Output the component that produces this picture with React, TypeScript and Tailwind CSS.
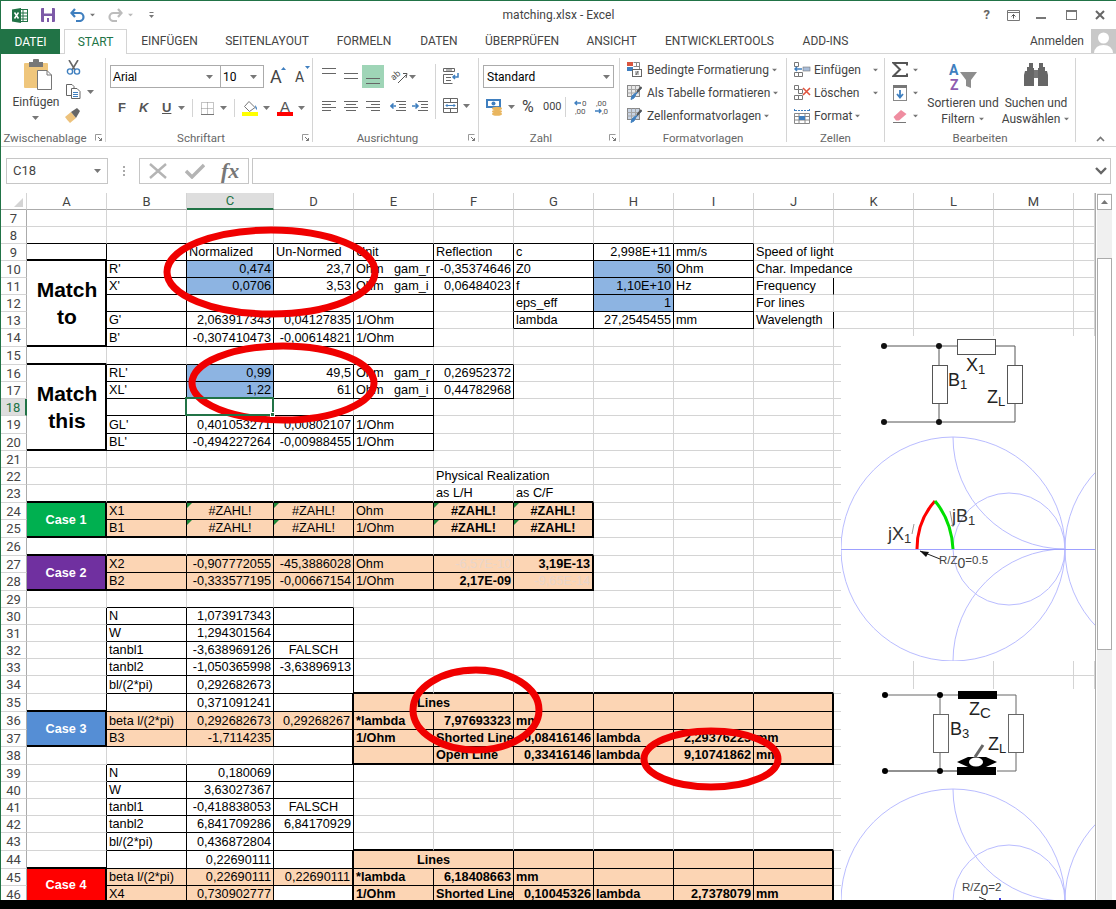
import React from 'react';

type Cell = { t?: string; a?: 'l' | 'r' | 'c'; b?: boolean; o?: boolean; bg?: string; fg?: string; big?: boolean; tri?: boolean; span?: string; covers?: string[] };

const COLS = 'ABCDEFGHIJKLMN'.split('');
const ROWS: number[] = [];
for (let r = 7; r <= 46; r++) ROWS.push(r);

const BLUE = 'bg-[#8db4e2]';
const ORANGE = 'bg-[#fcd5b4]';

const cells: Record<string, Cell> = {};
const put = (k: string, v: Cell) => {
  cells[k] = { ...(cells[k] || {}), ...v };
};
const L = (k: string, t: string, x: Cell = {}) => put(k, { t, a: 'l', ...x });
const R = (k: string, t: string, x: Cell = {}) => put(k, { t, a: 'r', ...x });
const C = (k: string, t: string, x: Cell = {}) => put(k, { t, a: 'c', ...x });

const hEdge: Record<string, number> = {};
const vEdge: Record<string, number> = {};
const setE = (m: Record<string, number>, k: string, v: number) => {
  m[k] = Math.max(m[k] || 0, v);
};
const parse = (k: string) => ({ c: COLS.indexOf(k[0]), r: parseInt(k.slice(1), 10) });
const box = (a: string, b: string, inner: number, outer: number) => {
  const p = parse(a);
  const q = parse(b);
  for (let r = p.r; r <= q.r; r++) {
    for (let c = p.c; c <= q.c; c++) {
      const top = r === p.r ? outer : inner;
      const bot = r === q.r ? outer : inner;
      const lef = c === p.c ? outer : inner;
      const rig = c === q.c ? outer : inner;
      if (top) setE(hEdge, `${r - 1},${c}`, top);
      if (bot) setE(hEdge, `${r},${c}`, bot);
      if (lef) setE(vEdge, `${r},${c - 1}`, lef);
      if (rig) setE(vEdge, `${r},${c}`, rig);
    }
  }
};
const fill = (a: string, b: string, bg: string) => {
  const p = parse(a);
  const q = parse(b);
  for (let r = p.r; r <= q.r; r++) for (let c = p.c; c <= q.c; c++) put(COLS[c] + r, { bg });
};

// ---- upper tables
box('A9', 'F9', 1, 1);
box('B10', 'F11', 1, 1);
box('B12', 'E12', 0, 1);
box('B12', 'B12', 0, 1);
box('B13', 'E14', 1, 1);
box('A10', 'A14', 0, 2);
box('B16', 'F17', 1, 1);
box('B18', 'E18', 0, 1);
box('B18', 'B18', 0, 1);
box('B19', 'E20', 1, 1);
box('A16', 'A20', 0, 2);
box('G9', 'I13', 1, 1);
setE(vEdge, '11,9', 1);
setE(vEdge, '13,9', 1);

put('A10', { t: 'Match\nto', big: true, span: 'row-span-5', covers: ['A11', 'A12', 'A13', 'A14'] });
put('A16', { t: 'Match\nthis', big: true, span: 'row-span-5', covers: ['A17', 'A18', 'A19', 'A20'] });

L('C9', 'Normalized');
L('D9', 'Un-Normed');
L('E9', 'Unit');
L('F9', 'Reflection');
L('G9', 'c');
R('H9', '2,998E+11');
L('I9', 'mm/s');
L('J9', 'Speed of light', { o: true });
L('B10', "R'");
R('C10', '0,474', { bg: BLUE });
R('D10', '23,7');
L('E10', 'Ohm   gam_r');
R('F10', '-0,35374646');
L('G10', 'Z0');
R('H10', '50', { bg: BLUE });
L('I10', 'Ohm');
L('J10', 'Char. Impedance', { o: true });
L('B11', "X'");
R('C11', '0,0706', { bg: BLUE });
R('D11', '3,53');
L('E11', 'Ohm   gam_i');
R('F11', '0,06484023');
L('G11', 'f');
R('H11', '1,10E+10', { bg: BLUE });
L('I11', 'Hz');
L('J11', 'Frequency');
L('G12', 'eps_eff');
R('H12', '1', { bg: BLUE });
L('J12', 'For lines');
L('B13', "G'");
R('C13', '2,063917343');
R('D13', '0,04127835');
L('E13', '1/Ohm');
L('G13', 'lambda');
R('H13', '27,2545455');
L('I13', 'mm');
L('J13', 'Wavelength');
L('B14', "B'");
R('C14', '-0,307410473');
R('D14', '-0,00614821');
L('E14', '1/Ohm');
L('B16', "RL'");
R('C16', '0,99', { bg: BLUE });
R('D16', '49,5');
L('E16', 'Ohm   gam_r');
R('F16', '0,26952372');
L('B17', "XL'");
R('C17', '1,22', { bg: BLUE });
R('D17', '61');
L('E17', 'Ohm   gam_i');
R('F17', '0,44782968');
L('B19', "GL'");
R('C19', '0,401053271');
R('D19', '0,00802107');
L('E19', '1/Ohm');
L('B20', "BL'");
R('C20', '-0,494227264');
R('D20', '-0,00988455');
L('E20', '1/Ohm');
L('F22', 'Physical Realization', { o: true });
L('F23', 'as L/H');
L('G23', 'as C/F');

// ---- cases
box('B24', 'G25', 1, 2);
box('A24', 'A25', 0, 2);
fill('B24', 'G25', ORANGE);
put('A24', { t: 'Case 1', a: 'c', b: true, bg: 'bg-[#00b050]', fg: 'text-white', span: 'row-span-2', covers: ['A25'] });
L('B24', 'X1');
C('C24', '#ZAHL!', { tri: true });
C('D24', '#ZAHL!', { tri: true });
L('E24', 'Ohm');
C('F24', '#ZAHL!', { b: true, tri: true });
C('G24', '#ZAHL!', { b: true, tri: true });
L('B25', 'B1');
C('C25', '#ZAHL!', { tri: true });
C('D25', '#ZAHL!', { tri: true });
L('E25', '1/Ohm');
C('F25', '#ZAHL!', { b: true, tri: true });
C('G25', '#ZAHL!', { b: true, tri: true });

box('B27', 'G28', 1, 2);
box('A27', 'A28', 0, 2);
fill('B27', 'G28', ORANGE);
put('A27', { t: 'Case 2', a: 'c', b: true, bg: 'bg-[#7030a0]', fg: 'text-white', span: 'row-span-2', covers: ['A28'] });
L('B27', 'X2');
R('C27', '-0,907772055');
R('D27', '-45,3886028');
L('E27', 'Ohm');
R('F27', '-6,57E-10', { fg: 'text-[#e9d6cb]' });
R('G27', '3,19E-13', { b: true });
L('B28', 'B2');
R('C28', '-0,333577195');
R('D28', '-0,00667154');
L('E28', '1/Ohm');
R('F28', '2,17E-09', { b: true });
R('G28', '-9,65E-14', { fg: 'text-[#e9d6cb]' });

box('B30', 'D37', 1, 1);
box('B39', 'D46', 1, 1);
L('B30', 'N');
R('C30', '1,073917343');
L('B31', 'W');
R('C31', '1,294301564');
L('B32', 'tanbl1');
R('C32', '-3,638969126');
C('D32', 'FALSCH');
L('B33', 'tanbl2');
R('C33', '-1,050365998');
R('D33', '-3,63896913');
L('B34', 'bl/(2*pi)');
R('C34', '0,292682673');
R('C35', '0,371091241');
fill('B36', 'D36', ORANGE);
fill('B37', 'C37', ORANGE);
L('B36', 'beta l/(2*pi)');
R('C36', '0,292682673');
R('D36', '0,29268267');
L('B37', 'B3');
R('C37', '-1,7114235');
box('A36', 'A37', 0, 2);
put('A36', { t: 'Case 3', a: 'c', b: true, bg: 'bg-[#558ed5]', fg: 'text-white', span: 'row-span-2', covers: ['A37'] });

L('B39', 'N');
R('C39', '0,180069');
L('B40', 'W');
R('C40', '3,63027367');
L('B41', 'tanbl1');
R('C41', '-0,418838053');
C('D41', 'FALSCH');
L('B42', 'tanbl2');
R('C42', '6,841709286');
R('D42', '6,84170929');
L('B43', 'bl/(2*pi)');
R('C43', '0,436872804');
R('C44', '0,22690111');
fill('B45', 'D45', ORANGE);
fill('B46', 'C46', ORANGE);
L('B45', 'beta l/(2*pi)');
R('C45', '0,22690111');
R('D45', '0,22690111');
L('B46', 'X4');
R('C46', '0,730902777');
box('A45', 'A46', 0, 2);
put('A45', { t: 'Case 4', a: 'c', b: true, bg: 'bg-[#ff0000]', fg: 'text-white', span: 'row-span-2', covers: ['A46'] });

// ---- lines tables
box('E35', 'J38', 1, 2);
fill('E35', 'J38', ORANGE);
put('E35', { t: 'Lines', a: 'c', b: true, span: 'col-span-2', covers: ['F35'] });
L('E36', '*lambda', { b: true });
R('F36', '7,97693323', { b: true });
L('G36', 'mm', { b: true });
L('E37', '1/Ohm', { b: true });
L('F37', 'Shorted Line', { b: true });
R('G37', '0,08416146', { b: true });
L('H37', 'lambda', { b: true });
R('I37', '2,29376223', { b: true });
L('J37', 'mm', { b: true });
L('F38', 'Open Line', { b: true });
R('G38', '0,33416146', { b: true });
L('H38', 'lambda', { b: true });
R('I38', '9,10741862', { b: true });
L('J38', 'mm', { b: true });

box('E44', 'J47', 1, 2);
fill('E44', 'J46', ORANGE);
put('E44', { t: 'Lines', a: 'c', b: true, span: 'col-span-2', covers: ['F44'] });
L('E45', '*lambda', { b: true });
R('F45', '6,18408663', { b: true });
L('G45', 'mm', { b: true });
L('E46', '1/Ohm', { b: true });
L('F46', 'Shorted Line', { b: true });
R('G46', '0,10045326', { b: true });
L('H46', 'lambda', { b: true });
R('I46', '2,7378079', { b: true });
L('J46', 'mm', { b: true });

const covered = new Set<string>();
Object.values(cells).forEach((v) => (v.covers || []).forEach((k) => covered.add(k)));

const BorderR: Record<number, string> = {
  0: 'border-r border-r-[#d4d4d4]',
  1: 'border-r border-r-black',
  2: 'border-r-2 border-r-black',
};
const BorderB: Record<number, string> = {
  0: 'border-b border-b-[#d4d4d4]',
  1: 'border-b border-b-black',
  2: 'border-b-2 border-b-black',
};
const noRight: Record<string, boolean> = { F22: true, J9: true, J10: true };

function SheetCell({ k }: { k: string }) {
  const cell = cells[k] || {};
  const { c, r } = parse(k);
  let endC = c;
  let endR = r;
  (cell.covers || []).forEach((x) => {
    const p = parse(x);
    endC = Math.max(endC, p.c);
    endR = Math.max(endR, p.r);
  });
  const rk = vEdge[`${r},${endC}`] || 0;
  const bk = hEdge[`${endR},${c}`] || 0;
  const right = noRight[k] ? 'border-r border-r-transparent' : BorderR[rk];
  const align = cell.a === 'r' ? 'justify-end pr-[2px]' : cell.a === 'c' ? 'justify-center' : 'justify-start pl-[2px]';
  return (
    <div
      className={`relative flex min-w-0 min-h-0 ${cell.big ? 'items-center text-center' : 'items-center pt-[1px]'} ${align} ${right} ${BorderB[bk]} ${cell.bg || ''} ${cell.fg || 'text-black'} ${cell.b ? 'font-bold' : ''} ${cell.o ? 'overflow-visible z-10' : k === 'C18' ? 'overflow-visible z-10' : 'overflow-hidden'} ${cell.span || ''} whitespace-pre`}
    >
      {cell.tri && (
        <svg width="5" height="5" className="absolute left-0 top-0">
          <polygon points="0,0 5,0 0,5" fill="#1f8a3a" />
        </svg>
      )}
      {cell.big ? (
        <span className="w-full text-[21px] font-bold leading-[27px]">{cell.t}</span>
      ) : (
        <span>{cell.t}</span>
      )}
      {k === 'C18' && (
        <div className="absolute -left-[2px] -top-[2px] -right-[1px] -bottom-[1px] border-2 border-[#217346]">
          <div className="absolute -right-[3px] -bottom-[3px] w-[5px] h-[5px] bg-[#217346] border border-white" />
        </div>
      )}
    </div>
  );
}

function Sheet() {
  return (
    <div className="w-[1095px] border-r border-r-[#ababab] overflow-hidden">
      <div className="grid grid-cols-[26px_80px_80px_87px_80px_80px_80px_80px_80px_80px_80px_80px_80px_80px_21px] grid-rows-[17px_17px_17px_17px_17px_17px_17px_17px_18px_18px_17px_17px_17px_18px_17px_17px_17px_18px_17px_18px_18px_17px_18px_17px_17px_17px_17px_17px_18px_18px_18px_17px_18px_17px_17px_17px_17px_18px_18px_17px_17px] text-[12.7px] leading-[15px] font-['Liberation_Sans',Arial,sans-serif]">
        <div className="flex items-end justify-end border-r border-r-[#d4d4d4] border-b border-b-[#ababab] pr-[3px] pb-[2px]">
          <svg width="9" height="9">
            <polygon points="9,0 9,9 0,9" fill="#d4d4d4" />
          </svg>
        </div>
        {COLS.map((c) => (
          <div
            key={c}
            className={`flex items-center justify-center border-r border-r-[#d4d4d4] font-['Roboto',sans-serif] text-[13px] ${
              c === 'C'
                ? 'bg-[#dedede] border-b-2 border-b-[#217346] text-[#217346]'
                : 'border-b border-b-[#ababab] text-[#444444]'
            }`}
          >
            {c === 'N' ? '' : c}
          </div>
        ))}
        {ROWS.map((r) => (
          <React.Fragment key={r}>
            <div
              className={`flex items-center justify-center font-['Roboto',sans-serif] text-[13px] border-b border-b-[#d4d4d4] ${
                r === 18
                  ? 'bg-[#dedede] border-r-2 border-r-[#217346] text-[#217346]'
                  : 'border-r border-r-[#ababab] text-[#444444]'
              }`}
            >
              {r}
            </div>
            {COLS.map((c) => {
              const k = c + r;
              if (covered.has(k)) return null;
              return <SheetCell key={k} k={k} />;
            })}
          </React.Fragment>
        ))}
      </div>
    </div>
  );
}

// ---------- small drawing helpers
function Ico({ w, h, className, children }: { w: number; h: number; className?: string; children?: React.ReactNode }) {
  return (
    <svg width={w} height={h} viewBox={`0 0 ${w} ${h}`} className={`shrink-0 block ${className || ''}`}>
      {children}
    </svg>
  );
}
const Caret = ({ className }: { className?: string }) => (
  <Ico w={7} h={4} className={className}>
    <polygon points="0,0 7,0 3.5,4" fill="#777777" />
  </Ico>
);
const Lines = ({ rows, w = 14, h = 14 }: { rows: [number, number, number][]; w?: number; h?: number }) => (
  <Ico w={w} h={h}>
    {rows.map(([y, x1, x2], i) => (
      <line key={i} x1={x1} x2={x2} y1={y + 0.5} y2={y + 0.5} stroke="#666666" strokeWidth="1" />
    ))}
  </Ico>
);

const Launcher = () => (
  <Ico w={7} h={7} className="absolute right-[3px] bottom-[1px]">
    <path d="M0.5 0.5H6.5M0.5 0.5V6.5" stroke="#999999" fill="none" />
    <path d="M3 3L6.5 6.5M6.5 4V6.5H4" stroke="#777777" fill="none" />
  </Ico>
);

function Group({ className, label, launcher, children }: { className: string; label: string; launcher?: boolean; children: React.ReactNode }) {
  return (
    <div className={`relative flex flex-col shrink-0 border-r border-r-[#d4d4d4] ${className}`}>
      <div className="flex-1 min-h-0">{children}</div>
      <div className={`h-[14px] -mb-[3px] text-center text-[11.5px] leading-[14px] text-[#666666] whitespace-nowrap ${launcher ? 'pr-[16px]' : ''}`}>{label}</div>
      {launcher && <Launcher />}
    </div>
  );
}

const StyleRow = ({ icon, text, caretClass, className }: { icon: React.ReactNode; text: string; caretClass: string; className?: string }) => (
  <div className={`flex items-center h-[23px] ${className || ''}`}>
    <div className="w-[20px] flex justify-start">{icon}</div>
    <span className="text-[12px] text-[#444444] whitespace-nowrap">{text}</span>
    <Caret className={`scale-75 ${caretClass}`} />
  </div>
);

function TableIcon({ tint, brush }: { tint: string; brush?: boolean }) {
  return (
    <Ico w={15} h={15}>
      <rect x="0.5" y="0.5" width="12" height="11" fill={tint} stroke="#888888" />
      <path d="M0.5 4.5H12.5M0.5 8H12.5M4.5 0.5V11.5M8.5 0.5V11.5" stroke="#a5a5a5" fill="none" />
      {brush && <path d="M14.5 3L9 9L7 13L4 14.5L5 11L8 8.5" fill="#3f7fbf" stroke="#3f7fbf" strokeWidth="1" />}
      {brush && <path d="M14.5 2L10 7" stroke="#555555" strokeWidth="2" />}
    </Ico>
  );
}

const Paste = () => (
  <Ico w={30} h={32}>
    <rect x="2" y="4" width="24" height="25" rx="1" fill="#efc67c" />
    <rect x="7" y="3" width="14" height="5" fill="#777777" />
    <rect x="11" y="0" width="6" height="4" rx="1" fill="#777777" />
    <path d="M15.5 11.5H25L29.5 16V30.5H15.5Z" fill="#ffffff" stroke="#777777" />
    <path d="M25 11.5V16H29.5" fill="none" stroke="#777777" />
  </Ico>
);

const Scissors = () => (
  <Ico w={15} h={15}>
    <path d="M3 0L9 10M12 0L6 10" stroke="#666666" strokeWidth="1.6" />
    <circle cx="4" cy="11.5" r="2.6" fill="none" stroke="#3f7fbf" strokeWidth="1.4" />
    <circle cx="11" cy="11.5" r="2.6" fill="none" stroke="#3f7fbf" strokeWidth="1.4" />
  </Ico>
);

const Copy = () => (
  <Ico w={15} h={15}>
    <path d="M0.5 0.5H6L8 2.5V11.5H0.5Z" fill="#ffffff" stroke="#666666" />
    <path d="M5.5 4.5H11L14 7.5V14.5H5.5Z" fill="#ffffff" stroke="#666666" />
    <path d="M7 8.5H12M7 10.5H12M7 12.5H12" stroke="#3f7fbf" />
  </Ico>
);

const Brush = () => (
  <Ico w={17} h={15}>
    <path d="M0 9L6 4L11 10L5 15Q2 12 0 9Z" fill="#edc27c" />
    <path d="M6 4L12 0L15 3L11 10Z" fill="#666666" />
  </Ico>
);

export default function App() {
  return (
    <div className="relative w-[1116px] h-[909px] overflow-hidden bg-white font-['Roboto',sans-serif]">
      <div className="h-[900px] border-l border-t border-[#217346] overflow-hidden flex flex-col">
        {/* title bar */}
        <div className="relative flex items-center h-[28px] shrink-0">
          <Ico w={16} h={15} className="ml-[11px]">
            <rect x="6.5" y="1.5" width="9" height="12" fill="#ffffff" stroke="#217346" />
            <path d="M7 5H15M7 8H15M7 11H15M11 2V13" stroke="#217346" />
            <polygon points="0,1.5 9,0 9,15 0,13.5" fill="#217346" />
            <path d="M2.5 4.5L6.5 10.5M6.5 4.5L2.5 10.5" stroke="#ffffff" strokeWidth="1.5" />
          </Ico>
          <Ico w={14} h={14} className="ml-[13px]">
            <rect x="0" y="0" width="14" height="14" rx="1" fill="#7d5aa8" />
            <rect x="3" y="0" width="8" height="5.5" fill="#ffffff" />
            <rect x="3" y="8" width="8" height="6" fill="#ffffff" />
            <rect x="6" y="10" width="2" height="4" fill="#7d5aa8" />
          </Ico>
          <Ico w={15} h={14} className="ml-[15px]">
            <path d="M5 1L1.5 5L5 9M1.5 5H9.5A4 4 0 0 1 9.5 13H6" fill="none" stroke="#3f7fbf" strokeWidth="2.2" />
          </Ico>
          <Caret className="ml-[4px] scale-75" />
          <Ico w={15} h={14} className="ml-[12px]">
            <path d="M10 1L13.5 5L10 9M13.5 5H5.5A4 4 0 0 0 5.5 13H9" fill="none" stroke="#bcbcbc" strokeWidth="2.2" />
          </Ico>
          <Caret className="ml-[4px] scale-75 opacity-50" />
          <Ico w={7} h={7} className="ml-[14px]">
            <path d="M1.5 0.5H5.5" stroke="#777777" />
            <polygon points="1,3 6,3 3.5,6" fill="#777777" />
          </Ico>
          <div className="absolute left-0 right-0 top-[7px] text-center text-[12px] leading-[15px] text-[#444444]">matching.xlsx - Excel</div>
          <div className="ml-auto flex items-center text-[#666666] pr-[11px]">
            <span className="text-[13px] font-bold mr-[17px]">?</span>
            <Ico w={13} h={11} className="mr-[16px]">
              <path d="M0.5 0.5H12.5V10.5H0.5ZM0.5 2.5H12.5" fill="none" stroke="#777777" />
              <path d="M6.5 8.5V4.5M4.5 6.5L6.5 4.5L8.5 6.5" fill="none" stroke="#555555" />
            </Ico>
            <Ico w={10} h={10} className="mr-[20px]">
              <rect x="0" y="7" width="10" height="2" fill="#777777" />
            </Ico>
            <Ico w={11} h={10} className="mr-[18px]">
              <rect x="0.5" y="1" width="10" height="8.5" fill="none" stroke="#777777" />
              <rect x="0" y="0" width="11" height="2" fill="#777777" />
            </Ico>
            <Ico w={10} h={10}>
              <path d="M1 1L9 9M9 1L1 9" stroke="#666666" strokeWidth="2" />
            </Ico>
          </div>
        </div>
        {/* tabs */}
        <div className="relative flex h-[25px] shrink-0 border-b border-b-[#d4d4d4] text-[12px] text-[#444444]">
          <div className="flex items-center justify-center w-[59px] h-[25px] bg-[#217346] text-white">DATEI</div>
          <div className="flex items-center justify-center w-[63px] h-[25px] ml-[4px] bg-white text-[#217346] border border-[#d4d4d4] border-b-0 z-10">START</div>
          {[
            ['EINFÜGEN', 'w-[85px]'],
            ['SEITENLAYOUT', 'w-[110px]'],
            ['FORMELN', 'w-[84px]'],
            ['DATEN', 'w-[66px]'],
            ['ÜBERPRÜFEN', 'w-[100px]'],
            ['ANSICHT', 'w-[79px]'],
            ['ENTWICKLERTOOLS', 'w-[137px]'],
            ['ADD-INS', 'w-[75px]'],
          ].map(([t, w]) => (
            <div key={t} className={`flex items-center justify-center h-[24px] ${w}`}>
              {t}
            </div>
          ))}
          <div className="ml-auto flex items-center">
            <span className="mr-[7px] text-[#444444]">Anmelden</span>
            <Ico w={25} h={24}>
              <rect width="25" height="24" fill="#c8c8c8" />
              <circle cx="12.5" cy="9" r="5.5" fill="#ffffff" />
              <path d="M3 24Q4 16 12.5 16Q21 16 22 24Z" fill="#ffffff" />
            </Ico>
          </div>
        </div>
        {/* ribbon */}
        <div className="relative flex h-[93px] shrink-0 pt-[4px] pb-[4px] border-b border-b-[#d4d4d4] text-[#444444]">
          <Group className="w-[105px]" label="Zwischenablage" launcher>
            <div className="flex">
              <div className="w-[62px] flex flex-col items-center">
                <div className="mt-[1px] ml-[10px]"><Paste /></div>
                <div className="text-[12px] leading-[16px] mt-[3px] ml-[8px]">Einfügen</div>
                <Caret className="mt-[6px] ml-[6px]" />
              </div>
              <div className="flex flex-col">
                <div className="mt-[2px] ml-[3px]"><Scissors /></div>
                <div className="mt-[9px] ml-[3px] flex items-center"><Copy /><Caret className="ml-[6px]" /></div>
                <div className="mt-[9px] ml-[2px]"><Brush /></div>
              </div>
            </div>
          </Group>
          <Group className="w-[207px]" label="Schriftart" launcher>
            <div className="flex items-center mt-[7px] ml-[4px]">
              <div className="flex items-center justify-between w-[111px] h-[23px] border border-[#ababab] pl-[2px] pr-[7px] text-[13px] text-black">
                <span className="font-['Liberation_Sans',sans-serif] text-[12px]">Arial</span>
                <Caret />
              </div>
              <div className="flex items-center justify-between w-[44px] h-[23px] -ml-px border border-[#ababab] pl-[2px] pr-[6px] text-[12px] text-black">
                <span>10</span>
                <Caret />
              </div>
              <div className="relative ml-[6px] w-[16px] text-[18px] leading-[20px]">
                A
                <Ico w={5} h={3} className="absolute right-0 top-0"><polygon points="0,3 5,3 2.5,0" fill="#3f7fbf" /></Ico>
              </div>
              <div className="relative ml-[9px] w-[15px] text-[14px] leading-[20px] pt-[1px]">
                A
                <Ico w={5} h={3} className="absolute right-0 top-0"><polygon points="0,0 5,0 2.5,3" fill="#3f7fbf" /></Ico>
              </div>
            </div>
            <div className="flex items-center h-[18px] mt-[11px] ml-[12px] text-[13px] font-bold text-[#555555] font-['Liberation_Sans',sans-serif]">
              <span className="w-[8px]">F</span>
              <span className="w-[9px] ml-[13px] italic">K</span>
              <span className="w-[9px] ml-[14px] underline">U</span>
              <Caret className="ml-[7px]" />
              <div className="w-px h-[18px] bg-[#d4d4d4] ml-[7px]" />
              <Ico w={13} h={13} className="ml-[8px]">
                <path d="M0.5 0.5H12.5V12.5H0.5ZM6.5 0.5V12.5M0.5 6.5H12.5" fill="none" stroke="#8a8a8a" strokeDasharray="1 1" />
                <path d="M0 12.5H13" stroke="#777777" />
              </Ico>
              <Caret className="ml-[6px]" />
              <div className="w-px h-[18px] bg-[#d4d4d4] ml-[7px]" />
              <div className="ml-[7px] flex flex-col">
                <Ico w={16} h={11}>
                  <path d="M7 0.5L13 6.5L7.5 10.5L2.5 5.5Z" fill="#ffffff" stroke="#777777" />
                  <path d="M13 4Q16 7 14.5 9Q13 7 13 4Z" fill="#3f7fbf" />
                </Ico>
                <div className="h-[4px] w-[16px] bg-[#ffff00]" />
              </div>
              <Caret className="ml-[5px]" />
              <div className="ml-[7px] flex flex-col items-center w-[16px]">
                <span className="text-[15px] leading-[11px] font-normal">A</span>
                <div className="h-[4px] w-[16px] bg-[#ff0000]" />
              </div>
              <Caret className="ml-[5px]" />
            </div>
          </Group>
          <Group className="w-[166px]" label="Ausrichtung" launcher>
            <div className="flex ml-[9px]">
              <div className="flex flex-col">
                <div className="flex items-center h-[23px] mt-[7px]">
                  <Lines h={23} rows={[[3, 0, 14], [8, 0, 14]]} />
                  <div className="ml-[8px]"><Lines h={23} rows={[[8, 0, 14], [13, 0, 14]]} /></div>
                  <div className="ml-[4px] w-[22px] h-[23px] bg-[#9fd5b7] pl-[4px]"><Lines h={23} rows={[[13, 0, 14], [18, 0, 14]]} /></div>
                  <Ico w={18} h={15} className="ml-[6px] overflow-visible">
                    <text x="1" y="9" fontSize="9" fill="#555555" transform="rotate(-40 6 7)" fontFamily="Roboto">ab</text>
                    <path d="M8 14L16 6M13 4.5L17 4.5L16 9" fill="none" stroke="#555555" />
                  </Ico>
                  <Caret className="ml-[1px]" />
                </div>
                <div className="flex items-center h-[16px] mt-[9px]">
                  <Lines rows={[[3, 0, 14], [6, 0, 9], [9, 0, 14], [12, 0, 9]]} />
                  <div className="ml-[8px]"><Lines rows={[[3, 0, 14], [6, 2, 12], [9, 0, 14], [12, 2, 12]]} /></div>
                  <div className="ml-[8px]"><Lines rows={[[3, 0, 14], [6, 5, 14], [9, 0, 14], [12, 5, 14]]} /></div>
                  <Ico w={16} h={14} className="ml-[10px]">
                    <path d="M6 3.5H16M9 6.5H16M9 9.5H16M6 12.5H16" stroke="#666666" />
                    <path d="M6 8H1M3.5 5.5L1 8L3.5 10.5" stroke="#3f7fbf" strokeWidth="1.6" fill="none" />
                  </Ico>
                  <Ico w={16} h={14} className="ml-[6px]">
                    <path d="M6 3.5H16M9 6.5H16M9 9.5H16M6 12.5H16" stroke="#666666" />
                    <path d="M0 8H6M3.5 5.5L6 8L3.5 10.5" stroke="#3f7fbf" strokeWidth="1.6" fill="none" />
                  </Ico>
                </div>
              </div>
              <div className="w-px h-[55px] bg-[#d4d4d4] ml-[7px] mt-[6px]" />
              <div className="flex flex-col ml-[7px]">
                <Ico w={16} h={16} className="mt-[10px]">
                  <path d="M0.5 0.5H11.5V3.5H0.5ZM0.5 6.5H10M0.5 6.5V15.5H9.5M3 9.5H8M3 12.5H8M3 2H9" fill="none" stroke="#666666" />
                  <path d="M15 5V9H10M12 7L10 9L12 11" fill="none" stroke="#3f7fbf" strokeWidth="1.5" />
                </Ico>
                <div className="flex items-center mt-[14px]">
                  <Ico w={15} h={15}>
                    <path d="M0.5 0.5H14.5V14.5H0.5ZM0.5 4.5H14.5M0.5 10.5H14.5M7.5 0.5V4.5M7.5 10.5V14.5" fill="none" stroke="#666666" />
                    <path d="M3 7.5H12M4.5 6L3 7.5L4.5 9M10.5 6L12 7.5L10.5 9" fill="none" stroke="#3f7fbf" />
                  </Ico>
                  <Caret className="ml-[5px]" />
                </div>
              </div>
            </div>
          </Group>
          <Group className="w-[141px]" label="Zahl" launcher>
            <div className="flex items-center justify-between w-[131px] h-[23px] mt-[7px] ml-[4px] border border-[#ababab] pl-[3px] pr-[3px] text-[12px] text-black">
              <span>Standard</span>
              <Caret />
            </div>
            <div className="flex items-center h-[18px] mt-[10px] ml-[7px]">
              <Ico w={17} h={17}>
                <rect x="0" y="0" width="15" height="9" fill="#3f7fbf" />
                <rect x="2" y="2" width="11" height="5" fill="#ffffff" />
                <circle cx="7.5" cy="4.5" r="2" fill="#3f7fbf" />
                <ellipse cx="11" cy="9.5" rx="5" ry="1.8" fill="#e9b65f" />
                <ellipse cx="11" cy="12.5" rx="5" ry="1.8" fill="#e9b65f" />
                <ellipse cx="11" cy="15" rx="5" ry="1.8" fill="#e9b65f" />
              </Ico>
              <Caret className="ml-[5px]" />
              <span className="ml-[7px] text-[16px] w-[15px]">%</span>
              <span className="ml-[6px] text-[11px] w-[15px]">000</span>
              <div className="w-px h-[20px] bg-[#d4d4d4] ml-[7px]" />
              <Ico w={14} h={16} className="ml-[8px]">
                <path d="M1 4H7M3 2L1 4L3 6" fill="none" stroke="#3f7fbf" strokeWidth="1.4" />
                <text x="8" y="7" fontSize="8" fill="#555555" fontFamily="Roboto">0</text>
                <text x="1" y="15" fontSize="8" fill="#555555" fontFamily="Roboto">,00</text>
              </Ico>
              <Ico w={14} h={16} className="ml-[7px]">
                <text x="1" y="7" fontSize="8" fill="#555555" fontFamily="Roboto">,00</text>
                <path d="M0 12H6M4 10L6 12L4 14" fill="none" stroke="#3f7fbf" strokeWidth="1.4" />
                <text x="7" y="15" fontSize="8" fill="#555555" fontFamily="Roboto">,0</text>
              </Ico>
            </div>
          </Group>
          <Group className="w-[167px]" label="Formatvorlagen">
            <div className="ml-[7px]">
              <StyleRow
                text="Bedingte Formatierung"
                caretClass="ml-[2px]"
                icon={
                  <Ico w={15} h={15}>
                    <rect x="0" y="0" width="6" height="4" fill="#d9553f" />
                    <rect x="0" y="5" width="6" height="4" fill="#3f7fbf" />
                    <path d="M6.5 0.5H12.5V7M6.5 4.5H12.5M9.5 0.5V5" fill="none" stroke="#888888" />
                    <rect x="5.5" y="7.5" width="9" height="7" fill="#ffffff" stroke="#666666" />
                    <path d="M8 10H12M8 12H12M9 13L11 9" stroke="#555555" fill="none" strokeWidth="0.8" />
                  </Ico>
                }
              />
              <StyleRow caretClass="ml-[2px]" text="Als Tabelle formatieren" icon={<TableIcon tint="#e9e9e9" brush />} />
              <StyleRow caretClass="ml-[2px]" text="Zellenformatvorlagen" icon={<TableIcon tint="#c9d4e4" brush />} />
            </div>
          </Group>
          <Group className="w-[98px]" label="Zellen">
            <div className="ml-[7px]">
              <StyleRow
                text="Einfügen"
                caretClass="ml-[11px]"
                icon={
                  <Ico w={17} h={15}>
                    <path d="M0.5 0.5H4.5V4.5H0.5ZM0.5 10.5H4.5V14.5H0.5ZM4.5 10.5H8.5V14.5H4.5Z" fill="none" stroke="#777777" />
                    <rect x="9" y="5" width="7" height="4" fill="#a8bcd8" stroke="#777777" strokeWidth="0.6" />
                    <path d="M8 7H1M3 5L1 7L3 9" fill="none" stroke="#3f7fbf" strokeWidth="1.5" />
                  </Ico>
                }
              />
              <StyleRow
                text="Löschen"
                caretClass="ml-[13px]"
                icon={
                  <Ico w={17} h={15}>
                    <path d="M0.5 0.5H4.5V4.5H0.5ZM0.5 10.5H4.5V14.5H0.5ZM4.5 10.5H8.5V14.5H4.5ZM4.5 4.5H8.5V8.5H4.5Z" fill="none" stroke="#777777" />
                    <path d="M9 3L16 10M16 3L9 10" stroke="#e0533d" strokeWidth="1.6" />
                  </Ico>
                }
              />
              <StyleRow
                text="Format"
                caretClass="ml-[2px]"
                icon={
                  <Ico w={16} h={16}>
                    <path d="M0.5 1V4M15.5 1V4M1 2.5H15" stroke="#3f7fbf" strokeDasharray="2 1" fill="none" />
                    <path d="M0.5 5.5H15.5V15.5H0.5ZM0.5 8.5H15.5M0.5 12H15.5M5 5.5V15.5M11 5.5V15.5" fill="none" stroke="#888888" />
                    <rect x="5" y="8" width="6" height="4" fill="#3f7fbf" />
                  </Ico>
                }
              />
            </div>
          </Group>
          <Group className="w-[191px]" label="Bearbeiten">
            <div className="flex">
              <div className="flex flex-col ml-[7px] w-[32px]">
                <div className="flex items-center h-[23px]">
                  <Ico w={16} h={15}>
                    <path d="M15 3.5V1H1.5L8 7.5L1.5 14H15V11.5" fill="none" stroke="#555555" strokeWidth="2" />
                  </Ico>
                  <Caret className="ml-[4px] scale-75" />
                </div>
                <div className="flex items-center h-[23px]">
                  <Ico w={14} h={16} className="ml-[1px]">
                    <rect x="0.5" y="0.5" width="13" height="15" fill="#ffffff" stroke="#888888" />
                    <rect x="0" y="0" width="14" height="3" fill="#777777" />
                    <path d="M7 5V12M4 9L7 12.5L10 9" fill="none" stroke="#3f7fbf" strokeWidth="1.8" />
                  </Ico>
                  <Caret className="ml-[5px] scale-75" />
                </div>
                <div className="flex items-center h-[23px]">
                  <Ico w={14} h={14} className="ml-[1px]">
                    <path d="M0.5 8L8 1L13.5 5L6 11.5H3Z" fill="#ef8da0" />
                    <path d="M0 13.5H13" stroke="#777777" />
                  </Ico>
                  <Caret className="ml-[5px] scale-75" />
                </div>
              </div>
              <div className="flex flex-col items-center w-[70px] ml-[4px]">
                <Ico w={30} h={28} className="mt-[5px]">
                  <text x="1" y="12" fontSize="14" fontWeight="700" fill="#3f7fbf" fontFamily="Roboto">A</text>
                  <text x="2" y="27" fontSize="14" fontWeight="700" fill="#8f5cb0" fontFamily="Roboto">Z</text>
                  <polygon points="12,9 29,9 23,17 23,25 18,23 18,17" fill="#8d8d8d" />
                </Ico>
                <div className="text-[12px] leading-[16px] mt-[4px] whitespace-nowrap">Sortieren und</div>
                <div className="flex items-center text-[12px] leading-[16px] whitespace-nowrap">Filtern<Caret className="ml-[3px] scale-75" /></div>
              </div>
              <div className="flex flex-col items-center w-[70px] ml-[3px]">
                <Ico w={26} h={24} className="mt-[5px]">
                  <path d="M6 0H10V5H11V23H1V12L2 8H4V4H6Z" fill="#666666" />
                  <path d="M20 0H16V5H15V23H25V12L24 8H22V4H20Z" fill="#666666" />
                  <rect x="11" y="7" width="4" height="8" fill="#777777" />
                </Ico>
                <div className="text-[12px] leading-[16px] mt-[8px] whitespace-nowrap">Suchen und</div>
                <div className="flex items-center text-[12px] leading-[16px] whitespace-nowrap">Auswählen<Caret className="ml-[3px] scale-75" /></div>
              </div>
            </div>
          </Group>
          <div className="relative flex-1">
            <Ico w={9} h={6} className="absolute right-[11px] bottom-[0px]">
              <path d="M1 5L4.5 1.5L8 5" fill="none" stroke="#777777" strokeWidth="1.6" />
            </Ico>
          </div>
        </div>
        {/* formula bar */}
        <div className="flex items-start h-[46px] shrink-0 pt-[11px] pl-[5px]">
          <div className="flex items-center justify-between w-[102px] h-[26px] border border-[#c6c6c6] pl-[6px] pr-[6px] text-[13px] text-[#444444]">
            <span>C18</span>
            <Caret />
          </div>
          <div className="w-[2px] h-[10px] ml-[15px] mt-[8px] border-l-2 border-dotted border-[#aaaaaa]" />
          <div className="flex items-center w-[110px] h-[26px] ml-[14px] border border-[#c6c6c6]">
            <Ico w={18} h={16} className="ml-[9px]">
              <path d="M1 1L17 15M17 1L1 15" stroke="#b4b4b4" strokeWidth="2.4" />
            </Ico>
            <Ico w={20} h={16} className="ml-[18px]">
              <path d="M1 8L7 14L19 2" fill="none" stroke="#b4b4b4" strokeWidth="3.4" />
            </Ico>
            <span className="ml-[16px] font-['Liberation_Serif',serif] italic font-bold text-[22px] leading-[22px] text-[#777777]">fx</span>
          </div>
          <div className="flex items-center justify-end w-[859px] h-[26px] ml-[3px] border border-[#c6c6c6] pr-[3px]">
            <Ico w={12} h={8}>
              <path d="M1 1L6 6L11 1" fill="none" stroke="#666666" strokeWidth="2.4" />
            </Ico>
          </div>
        </div>
        {/* sheet + scrollbar */}
        <div className="relative flex flex-1 min-h-0">
          <Sheet />
          <div className="w-[15px] ml-px bg-[#f0f0f0] flex flex-col">
            <div className="flex items-center justify-center h-[16px] mt-px bg-white border border-[#ababab]">
              <Ico w={7} h={4}>
                <polygon points="0,4 7,4 3.5,0" fill="#777777" />
              </Ico>
            </div>
            <div className="h-[392px] mt-[48px] bg-white border border-[#ababab]" />
          </div>
        </div>
      </div>
      <div className="h-[9px] bg-black" />

      {/* picture 1 floating above the sheet */}
      <svg width="254" height="325" viewBox="841 336 254 325" className="absolute left-[841px] top-[336px] bg-white font-['Liberation_Sans',sans-serif]">
        <g stroke="#555555" strokeWidth="1" fill="none">
          <path d="M884 346H957M995 346H1015V365M1015 403V422H884M939 346V365M939 403V422" />
          <rect x="957.5" y="339.5" width="38" height="15" fill="#fff" />
          <rect x="932.5" y="365.5" width="15" height="38" fill="#fff" />
          <rect x="1007.5" y="365.5" width="15" height="38" fill="#fff" />
        </g>
        <g fill="#111111">
          <circle cx="884" cy="346" r="3" />
          <circle cx="939" cy="346" r="3" />
          <circle cx="884" cy="422" r="3" />
          <circle cx="939" cy="422" r="3" />
        </g>
        <g fill="#222222" fontSize="18">
          <text x="966" y="371">X<tspan fontSize="13" dy="3">1</tspan></text>
          <text x="948" y="386">B<tspan fontSize="13" dy="3">1</tspan></text>
          <text x="987" y="403">Z<tspan fontSize="13" dy="3">L</tspan></text>
        </g>
        <g stroke="#b9bcff" strokeWidth="1" fill="none">
          <circle cx="953" cy="549" r="112" />
          <circle cx="1009" cy="549" r="56" />
          <path d="M953 437A112 112 0 0 0 1065 549A112 112 0 0 0 953 661" />
          <circle cx="1177" cy="549" r="112" />
          <path d="M841 549.5H1095" stroke="#9da0ff" />
        </g>
        <path d="M917 549C917 528 925 512 935 501" fill="none" stroke="#ff0000" strokeWidth="3" />
        <path d="M953 549C952 530 945 513 935 501" fill="none" stroke="#00e000" strokeWidth="3" />
        <g fill="#333333" fontSize="18">
          <text x="888" y="540">jX<tspan fontSize="13" dy="3">1</tspan></text>
          <text x="952" y="522">jB<tspan fontSize="13" dy="3">1</tspan></text>
        </g>
        <text x="939" y="564" fontSize="11.5" fill="#444444">R/Z<tspan fontSize="14" dy="4">0</tspan><tspan dy="-4">=0.5</tspan></text>
        <path d="M940 559L920 551" stroke="#222222" />
        <polygon points="920,551 929,552 926,557" fill="#111111" />
        <path d="M912 534L914 524M950 511L953 527" stroke="#999999" fill="none" />
      </svg>

      {/* picture 2 floating above the sheet */}
      <svg width="254" height="211" viewBox="841 689 254 211" className="absolute left-[841px] top-[689px] bg-white font-['Liberation_Sans',sans-serif]">
        <g stroke="#666666" strokeWidth="1" fill="none">
          <path d="M885 695H958M997 695H1016V714M1016 752V771H997M940 695V714M940 752V771" />
          <path d="M885 771H957" stroke="#222222" />
          <rect x="933.5" y="714.5" width="15" height="38" fill="#fff" />
          <rect x="1008.5" y="714.5" width="15" height="38" fill="#fff" />
        </g>
        <g fill="#000000">
          <rect x="958" y="691" width="39" height="8" />
          <rect x="957" y="767" width="39" height="8" />
          <polygon points="957,762 968,757 986,757 997,762 986,767 968,767" />
          <circle cx="885" cy="695" r="3" />
          <circle cx="940" cy="695" r="3" />
          <circle cx="885" cy="771" r="3" />
          <circle cx="940" cy="771" r="3" />
        </g>
        <ellipse cx="976" cy="762" rx="7" ry="4.5" fill="#ffffff" />
        <path d="M975 757L983 745" stroke="#666666" strokeWidth="3" />
        <g fill="#222222" fontSize="18">
          <text x="969" y="715">Z<tspan fontSize="15" dy="3">C</tspan></text>
          <text x="950" y="735">B<tspan fontSize="13" dy="3">3</tspan></text>
          <text x="988" y="750">Z<tspan fontSize="13" dy="3">L</tspan></text>
        </g>
        <g stroke="#b9bcff" strokeWidth="1" fill="none">
          <circle cx="953" cy="901" r="112" />
          <circle cx="1009" cy="901" r="56" />
          <path d="M953 789A112 112 0 0 0 1065 901" />
          <circle cx="1177" cy="901" r="112" />
        </g>
        <text x="962" y="891" fontSize="11.5" fill="#444444">R/Z<tspan fontSize="14" dy="4">0</tspan><tspan dy="-4">=2</tspan></text>
        <path d="M979 897L986 900" stroke="#222222" />
        <circle cx="1000" cy="899" r="1" fill="#0000dd" />
      </svg>

      {/* hand-drawn marks over the sheet */}
      <svg width="1116" height="900" className="absolute left-0 top-0 pointer-events-none">
        <g fill="none" stroke="#f00000" strokeWidth="7">
          <ellipse cx="271" cy="272" rx="104" ry="42" />
          <ellipse cx="283" cy="383" rx="91" ry="37" />
          <ellipse cx="476" cy="710" rx="63" ry="40" />
          <ellipse cx="711" cy="759" rx="67" ry="28" />
        </g>
      </svg>
    </div>
  );
}
